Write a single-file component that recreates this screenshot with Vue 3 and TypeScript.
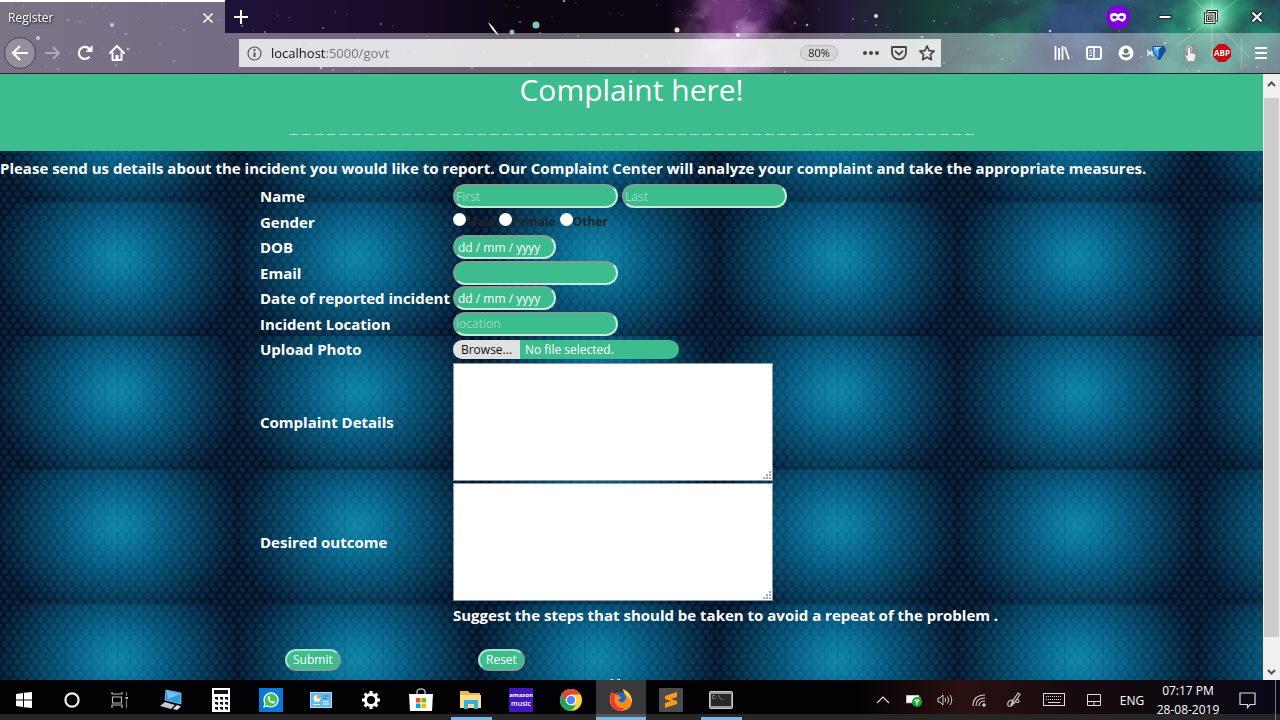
<script setup lang="ts">
import { ref } from 'vue'

interface Star {
  x: number
  y: number
  r: number
  c: string
}

const palette = ['#ffffff', '#e9dcb8', '#cfc6e6', '#bfe6ea']
const stars: Star[] = Array.from({ length: 150 }, (_, i) => ({
  x: (i * 397 + (i % 7) * 53) % 1280,
  y: (i * 31 + (i % 5) * 11) % 73,
  r: i % 19 === 0 ? 1.3 : i % 4 === 0 ? 0.8 : 0.5,
  c: palette[i % palette.length],
}))

const genders = ['Male', 'Female', 'Other']
const gender = ref('')
const first = ref('')
const last = ref('')
const dob = ref('')
const email = ref('')
const incidentDate = ref('')
const place = ref('')
const details = ref('')
const outcome = ref('')
const address = ref('localhost:5000/govt')
const rule = '_ '.repeat(55).trim()
</script>

<template>
  <div class="screen">
    <header class="chrome">
      <svg class="sky" viewBox="0 0 1280 73" preserveAspectRatio="none" aria-hidden="true">
        <defs>
          <linearGradient id="skyBase" x1="0" x2="1" y1="0" y2="0">
            <stop offset="0" stop-color="#2b2238" />
            <stop offset=".17" stop-color="#20133a" />
            <stop offset=".32" stop-color="#170a26" />
            <stop offset=".42" stop-color="#0a060e" />
            <stop offset=".52" stop-color="#0c0612" />
            <stop offset=".57" stop-color="#3c1c48" />
            <stop offset=".62" stop-color="#160b1c" />
            <stop offset=".66" stop-color="#241a38" />
            <stop offset=".7" stop-color="#16302e" />
            <stop offset=".77" stop-color="#1d5648" />
            <stop offset=".82" stop-color="#2a4468" />
            <stop offset=".88" stop-color="#2c5a76" />
            <stop offset=".94" stop-color="#2b8068" />
            <stop offset="1" stop-color="#24505c" />
          </linearGradient>
          <radialGradient id="burst">
            <stop offset="0" stop-color="#f0fff4" />
            <stop offset=".25" stop-color="#8fe8be" stop-opacity=".9" />
            <stop offset="1" stop-color="#2a9a74" stop-opacity="0" />
          </radialGradient>
          <radialGradient id="fade">
            <stop offset=".3" stop-color="#fff" />
            <stop offset="1" stop-color="#fff" stop-opacity="0" />
          </radialGradient>
          <mask id="veil"><ellipse cx="738" cy="34" rx="70" ry="80" fill="url(#fade)" /></mask>
          <filter id="soft" x="-40%" y="-40%" width="180%" height="180%">
            <feGaussianBlur stdDeviation="7" />
          </filter>
          <filter id="wisps" x="0" y="0" width="100%" height="100%">
            <feTurbulence type="fractalNoise" baseFrequency=".02 .03" numOctaves="4" seed="8" />
            <feColorMatrix values="0 0 0 0 .02  0 0 0 0 .02  0 0 0 0 .05  3 0 0 0 -1.2" />
          </filter>
          <filter id="glow" x="0" y="0" width="100%" height="100%">
            <feTurbulence type="fractalNoise" baseFrequency=".03 .04" numOctaves="4" seed="21" />
            <feColorMatrix values="0 0 0 0 .75  0 0 0 0 .45  0 0 0 0 .78  3 0 0 0 -1.3" />
          </filter>
        </defs>
        <rect width="1280" height="73" fill="url(#skyBase)" />
        <g filter="url(#soft)">
          <path d="M680 85L705 30L700-10H735L765 15L735 85Z" fill="#8c4892" opacity=".7" />
          <path d="M740 80L765 30L785-10H765L735 30Z" fill="#5c2b72" opacity=".8" />
          <path d="M1020-10H1060L1040 30L1000 80H960Z" fill="#238263" opacity=".6" />
          <path d="M1150 80L1170 10L1250-10L1290 30L1220 80Z" fill="#20a078" opacity=".55" />
          <path d="M1050 0L1110 10L1090 60L1040 50Z" fill="#3d568c" opacity=".5" />
        </g>
        <g mask="url(#veil)"><rect x="660" width="160" height="73" filter="url(#glow)" opacity=".5" /></g>
        <rect x="850" width="430" height="73" filter="url(#wisps)" opacity=".5" />
        <circle cx="1212" cy="16" r="34" fill="url(#burst)" />
        <path d="M1178 45L1250-10M1190-5L1250 58M1212-10V60" stroke="#b8f5dc" stroke-width=".7" opacity=".6" />
        <circle v-for="(s, i) in stars" :key="i" :cx="s.x" :cy="s.y" :r="s.r" :fill="s.c" opacity=".7" />
        <path d="M488 22Q494 27 499 36Q492 31 488 22" fill="#fff" />
        <circle cx="536" cy="25" r="3.500" fill="#7fc4cc" />
        <circle cx="512" cy="32" r="2.500" fill="#7fb9cc" />
        <circle cx="677" cy="30" r="2.500" fill="#efe6cc" />
        <circle cx="738" cy="35" r="2" fill="#efe6dc" />
        <circle cx="876" cy="16" r="2" fill="#efd8bc" />
        <circle cx="112" cy="25" r="2" fill="#b79cff" />
        <circle cx="38" cy="38" r="2" fill="#b79cff" />
      </svg>

      <div class="tabs">
        <div class="tab">
          <span>Register</span>
          <button class="icon close" aria-label="Close tab">
            <svg width="12" height="12" viewBox="0 0 12 12"><path d="M1.500 1.500L10.500 10.500M10.500 1.500L1.500 10.500" stroke="#fff" stroke-width="1.600" /></svg>
          </button>
        </div>
        <button class="icon plus" aria-label="New tab">
          <svg width="14" height="14" viewBox="0 0 14 14"><path d="M7 0V14M0 7H14" stroke="#fff" stroke-width="2" /></svg>
        </button>
        <span class="mask">
          <svg width="24" height="24" viewBox="0 0 24 24">
            <circle cx="12" cy="12" r="12" fill="#8000d7" />
            <path d="M4 10.500C5 7.500 9.500 7.500 12 9.500C14.500 7.500 19 7.500 20 10.500C20.300 14.500 18 17 15.500 16.500C13.800 16 13.500 15 12 15C10.500 15 10.200 16 8.500 16.500C6 17 3.700 14.500 4 10.500Z" fill="#fff" />
            <ellipse cx="8.500" cy="12.300" rx="2.300" ry="1.500" fill="#8000d7" /><ellipse cx="15.500" cy="12.300" rx="2.300" ry="1.500" fill="#8000d7" />
          </svg>
        </span>
        <button class="icon win" aria-label="Minimize">
          <svg width="14" height="14" viewBox="0 0 14 14"><rect x="1" y="5.500" width="12" height="3" fill="#fff" stroke="#222" /></svg>
        </button>
        <button class="icon win" aria-label="Restore">
          <svg width="14" height="14" viewBox="0 0 14 14" fill="none"><path d="M4 3.500V1.500H12.500V10H10.500" stroke="#222" stroke-width="3" /><path d="M4 3.500V1.500H12.500V10H10.500" stroke="#fff" stroke-width="1.200" /><rect x="1.500" y="4" width="8.500" height="8.500" stroke="#222" stroke-width="3" /><rect x="1.500" y="4" width="8.500" height="8.500" stroke="#fff" stroke-width="1.200" /><rect x="4.500" y="7" width="2.500" height="2.500" fill="#fff" stroke="#222" /></svg>
        </button>
        <button class="icon win" aria-label="Close window">
          <svg width="14" height="14" viewBox="0 0 14 14"><path d="M2 2L12 12M12 2L2 12" stroke="#222" stroke-width="4" /><path d="M2.500 2.500L11.500 11.500M11.500 2.500L2.500 11.500" stroke="#fff" stroke-width="2" /></svg>
        </button>
      </div>

      <div class="toolbar">
        <button class="icon tool back" aria-label="Back">
          <svg width="18" height="16" viewBox="0 0 18 16" fill="none" stroke="#fff" stroke-width="2.200"><path d="M17 8H2M9 1L2 8L9 15" /></svg>
        </button>
        <button class="icon tool dim" aria-label="Forward">
          <svg width="16" height="14" viewBox="0 0 16 14" fill="none" stroke="#fff" stroke-width="2"><path d="M0 7H14M8 1L14 7L8 13" /></svg>
        </button>
        <button class="icon tool" aria-label="Reload">
          <svg width="16" height="16" viewBox="0 0 16 16"><path d="M12.500 11.800A6 6 0 1 1 12.300 3.900" fill="none" stroke="#fff" stroke-width="2.200" /><path d="M15.500 0V7H8.500Z" fill="#fff" /></svg>
        </button>
        <button class="icon tool" aria-label="Home">
          <svg width="16" height="16" viewBox="0 0 16 16" fill="none" stroke="#fff" stroke-width="2" stroke-linejoin="round" stroke-linecap="round"><path d="M1 8L8 1L15 8" /><path d="M3.500 8V15H12.500V8" /><path d="M8 15V10" stroke-width="3" stroke-linecap="butt" /></svg>
        </button>
        <div class="urlbar">
          <svg width="15" height="15" viewBox="0 0 15 15"><circle cx="7.500" cy="7.500" r="6.500" fill="none" stroke="#555" stroke-width="1.200" /><path d="M7.500 6.500V11" stroke="#555" stroke-width="2" /><circle cx="7.500" cy="4.200" r="1.100" fill="#555" /></svg>
          <span class="address"><b>{{ address.split(':')[0] }}</b>:{{ address.split(':')[1] }}</span>
          <button class="zoom">80%</button>
          <button class="icon" aria-label="Page actions"><svg width="16" height="16" viewBox="0 0 16 16" fill="#444"><circle cx="2" cy="8" r="2" /><circle cx="8" cy="8" r="2" /><circle cx="14" cy="8" r="2" /></svg></button>
          <button class="icon" aria-label="Pocket"><svg width="16" height="16" viewBox="0 0 16 16" fill="none" stroke="#444" stroke-width="1.800" stroke-linejoin="round" stroke-linecap="round"><path d="M1 2H15V7.500A7 6.800 0 0 1 1 7.500Z" /><path d="M4.500 6.300L8 9.600L11.500 6.300" /></svg></button>
          <button class="icon" aria-label="Bookmark"><svg width="16" height="16" viewBox="0 0 16 16" fill="none" stroke="#444" stroke-width="1.700" stroke-linejoin="round"><path d="M8 1L10.100 5.600L15.100 6.200L11.400 9.600L12.400 14.700L8 12.200L3.600 14.700L4.600 9.600L.9 6.200L5.900 5.600Z" /></svg></button>
        </div>
        <button class="icon tool" aria-label="Library"><svg width="16" height="16" viewBox="0 0 16 16" fill="none" stroke="#fff" stroke-width="1.800"><path d="M1.500 1V15M5 3V15M8.500 1V15M10.800 2L15 14.500" /></svg></button>
        <button class="icon tool" aria-label="Sidebar"><svg width="18" height="16" viewBox="0 0 18 16" fill="none" stroke="#fff"><rect x="2" y="2" width="14" height="12" rx="2" stroke-width="2" /><path d="M9 2V14" stroke-width="1.500" /><path d="M4.500 5.500H7M4.500 8H7M4.500 10.500H7" /></svg></button>
        <button class="icon tool" aria-label="Account"><svg width="16" height="16" viewBox="0 0 16 16"><circle cx="8" cy="8" r="7.500" fill="#fff" /><circle cx="8" cy="6" r="2.500" fill="#68747c" /><path d="M3.500 9Q8 10.500 12.500 9Q11.500 12.500 8 12.500Q4.500 12.500 3.500 9Z" fill="#68747c" /></svg></button>
        <button class="icon tool" aria-label="Download helper"><svg width="22" height="16" viewBox="0 0 22 16"><path d="M0 5L6 11M6 5L0 11M0 8H6" stroke="#dce8ec" stroke-width="1.500" /><path d="M6 1H17L19 5L13 15H11.500L5 5Z" fill="#0b4f9e" /><path d="M7 2H12L11.500 13L6 5Z" fill="#4aaeea" /><path d="M7 2H15L10 5Z" fill="#b4e4fb" /></svg></button>
        <button class="icon tool" aria-label="Touch extension"><svg width="18" height="18" viewBox="0 0 18 18"><rect x="2" y="1" width="14" height="14" fill="#8e8e8e" opacity=".7" /><circle cx="8" cy="5" r="3" fill="none" stroke="#c8c8c8" /><path d="M7 4Q8 3 9 4V9L14 10Q15 11 13 17H7L4 11L7 12Z" fill="#eee" /></svg></button>
        <button class="icon tool" aria-label="Ad blocker"><svg width="18" height="18" viewBox="0 0 18 18"><path d="M5.500 0H12.500L18 5.500V12.500L12.500 18H5.500L0 12.500V5.500Z" fill="#c70d12" /><text x="9" y="12" class="abp" text-anchor="middle">ABP</text></svg></button>
        <span class="divider"></span>
        <button class="icon tool" aria-label="Menu"><svg width="12" height="12" viewBox="0 0 12 12"><path d="M0 1H12M0 6H12M0 11H12" stroke="#fff" stroke-width="2" /></svg></button>
      </div>
    </header>

    <main class="viewport">
      <div class="page">
        <div class="banner">
          <h1>Complaint here!</h1>
          <p aria-hidden="true">{{ rule }}</p>
        </div>
        <p class="intro">Please send us details about the incident you would like to report. Our Complaint Center will analyze your complaint and take the appropriate measures.</p>
        <form @submit.prevent>
          <table>
            <tbody>
              <tr>
                <th><label for="first">Name</label></th>
                <td><input id="first" v-model="first" class="field" placeholder="First" /><input v-model="last" class="field second" aria-label="Last name" placeholder="Last" /></td>
              </tr>
              <tr>
                <th>Gender</th>
                <td>
                  <div class="radios">
                    <label v-for="g in genders" :key="g"><input v-model="gender" type="radio" name="gender" :value="g" />{{ g }}</label>
                  </div>
                </td>
              </tr>
              <tr>
                <th><label for="dob">DOB</label></th>
                <td><input id="dob" v-model="dob" class="field date" placeholder="dd / mm / yyyy" /></td>
              </tr>
              <tr>
                <th><label for="email">Email</label></th>
                <td><input id="email" v-model="email" type="email" class="field" /></td>
              </tr>
              <tr>
                <th><label for="when">Date of reported incident</label></th>
                <td><input id="when" v-model="incidentDate" class="field date" placeholder="dd / mm / yyyy" /></td>
              </tr>
              <tr>
                <th><label for="place">Incident Location</label></th>
                <td><input id="place" v-model="place" class="field" placeholder="location" /></td>
              </tr>
              <tr>
                <th><label for="photo">Upload Photo</label></th>
                <td>
                  <label class="file"><input id="photo" type="file" /><span class="browse">Browse...</span><span>No file selected.</span></label>
                </td>
              </tr>
              <tr class="tall">
                <th><label for="details">Complaint Details</label></th>
                <td>
                  <div class="area"><textarea id="details" v-model="details"></textarea><svg width="8" height="8" viewBox="0 0 8 8" fill="#aaa"><path d="M6 0H8V2H6ZM3 3H5V5H3ZM6 3H8V5H6ZM0 6H2V8H0ZM3 6H5V8H3ZM6 6H8V8H6Z" /></svg></div>
                </td>
              </tr>
              <tr class="tall">
                <th><label for="outcome">Desired outcome</label></th>
                <td>
                  <div class="area"><textarea id="outcome" v-model="outcome"></textarea><svg width="8" height="8" viewBox="0 0 8 8" fill="#aaa"><path d="M6 0H8V2H6ZM3 3H5V5H3ZM6 3H8V5H6ZM0 6H2V8H0ZM3 6H5V8H3ZM6 6H8V8H6Z" /></svg></div>
                </td>
              </tr>
              <tr>
                <th></th>
                <td class="hint">Suggest the steps that should be taken to avoid a repeat of the problem .</td>
              </tr>
              <tr class="actions">
                <td><button type="submit" class="pill">Submit</button></td>
                <td><button type="reset" class="pill">Reset</button></td>
              </tr>
            </tbody>
          </table>
        </form>
        <a class="home" href="#">H</a>
      </div>
      <div class="scrollbar" aria-hidden="true">
        <svg width="17" height="24" viewBox="0 0 17 24" fill="none" stroke="#505050" stroke-width="2"><path d="M5 12L8.500 8.500L12 12" /></svg>
        <div class="thumb"></div>
        <svg width="17" height="17" viewBox="0 0 17 17" fill="none" stroke="#505050" stroke-width="2"><path d="M5 7L8.500 10.500L12 7" /></svg>
      </div>
    </main>

    <footer class="taskbar">
      <button class="app sys" aria-label="Start"><svg width="16" height="16" viewBox="0 0 16 16" fill="#fff"><path d="M0 2L7 1V7.500H0ZM8 .8L16 0V7.500H8ZM0 8.500H7V15L0 14ZM8 8.500H16V16L8 15.200Z" /></svg></button>
      <button class="app sys" aria-label="Search"><svg width="16" height="16" viewBox="0 0 16 16"><circle cx="8" cy="8" r="6.600" fill="none" stroke="#eee" stroke-width="2.200" /></svg></button>
      <button class="app sys" aria-label="Task view"><svg width="18" height="16" viewBox="0 0 18 16" fill="none" stroke="#bbb" stroke-width="1.200"><path d="M1 0V2H11V0M1.500 5H10.500V11H1.500ZM1 16V13H11V16" /><path d="M15.500 0V4M15.500 8V16" stroke="#777" /><path d="M14.500 6H17" stroke-width="2" /></svg></button>
      <button class="app spaced" aria-label="This PC"><svg width="24" height="22" viewBox="0 0 24 22"><path d="M7 1L22 4V15L6 11Z" fill="#2f9be0" stroke="#aad8f2" stroke-width=".7" /><path d="M8 2L21 5L9 10Z" fill="#72c4f4" /><path d="M1 17L6 13L16 16L12 20Z" fill="#c5cbd0" /><path d="M14 20L18 16L22 17.500L18 21Z" fill="#dfe3e6" /></svg></button>
      <button class="app" aria-label="Calculator"><svg width="18" height="24" viewBox="0 0 18 24"><rect width="18" height="24" fill="#fff" /><path d="M2 2H16V6H2ZM3 9H6V12L3 11ZM8 9H11V12L8 11ZM13 9H16V12L13 11ZM3 14H6V17L3 16ZM8 14H11V17L8 16ZM13 14H16V17L13 16ZM3 19H6V22L3 21ZM8 19H11V22L8 21ZM13 19H16V22L13 21Z" fill="#111" /></svg></button>
      <button class="app" aria-label="WhatsApp"><svg width="24" height="24" viewBox="0 0 24 24"><rect width="24" height="24" fill="#0878d7" /><path d="M5 19L6 15.500A7 7 0 1 1 8.500 18Z" fill="#3fc351" stroke="#fff" stroke-width="1.200" /><path d="M9.500 8L11 8.500L11.300 10.500L10.500 11.300Q11.300 13 13 13.700L14 12.700L16 13.700Q15.800 15.700 13.500 15.500Q9.500 14.500 8.700 10.500Q8.700 9 9.500 8Z" fill="#fff" /></svg></button>
      <button class="app" aria-label="Control panel"><svg width="22" height="16" viewBox="0 0 22 16"><rect x=".5" y=".5" width="21" height="15" fill="#65b9e8" stroke="#a8dcf5" /><circle cx="7" cy="6.500" r="3.500" fill="#e8f5fb" /><path d="M7 6.500V3A3.500 3.500 0 0 1 10.500 6.500Z" fill="#f0a030" /><path d="M3 12.500H10M13 9.500H19M13 12H19" stroke="#f4fcff" /><path d="M13 4H19M13 6.500H17" stroke="#1f80bc" /></svg></button>
      <button class="app" aria-label="Settings"><svg width="20" height="20" viewBox="0 0 20 20"><circle cx="10" cy="10" r="5.500" fill="none" stroke="#fff" stroke-width="3" /><g stroke="#fff" stroke-width="3"><path d="M10 1V4M10 16V19M1 10H4M16 10H19M3.600 3.600L5.800 5.800M14.200 14.200L16.400 16.400M3.600 16.400L5.800 14.200M14.200 5.800L16.400 3.600" /></g></svg></button>
      <button class="app" aria-label="Store"><svg width="24" height="24" viewBox="0 0 24 24"><path d="M8 7V4Q8 1 12 1Q16 1 16 4V7" fill="none" stroke="#aaa" stroke-width="1.500" /><path d="M0 6H24L23 23H1Z" fill="#fff" /><path d="M7 10H11.500V14.500H7Z" fill="#f25022" /><path d="M12.500 10H17V14.500H12.500Z" fill="#7fba00" /><path d="M7 15.500H11.500V20H7Z" fill="#00a4ef" /><path d="M12.500 15.500H17V20H12.500Z" fill="#ffb900" /></svg></button>
      <button class="app open" aria-label="File explorer"><svg width="22" height="20" viewBox="0 0 22 20"><path d="M0 1H8L10 3H20V6H0Z" fill="#e9b94a" /><path d="M0 5H21V18H0Z" fill="#fbe08c" /><path d="M4 19V10H18V19H14V14H8V19Z" fill="#38b0e4" /></svg></button>
      <button class="app" aria-label="Amazon Music"><svg width="24" height="24" viewBox="0 0 24 24"><rect width="24" height="24" fill="#4117bd" /><text x="12" y="9" class="amz" text-anchor="middle">amazon</text><text x="12" y="18" class="mus" text-anchor="middle">music</text></svg></button>
      <button class="app" aria-label="Chrome"><svg width="22" height="22" viewBox="0 0 22 22"><circle cx="11" cy="11" r="11" fill="#fdd23f" /><path d="M1.500 5.500A11 11 0 0 1 20.500 5.500H11L6.200 13.700Z" fill="#dd4b39" /><path d="M1.500 5.500L6.200 13.700L11 16.500H15.800L11 22A11 11 0 0 1 1.500 5.500Z" fill="#1da362" /><circle cx="11" cy="11" r="5.300" fill="#fff" /><circle cx="11" cy="11" r="4.200" fill="#4b8bf5" /></svg></button>
      <button class="app active" aria-label="Firefox"><svg width="24" height="24" viewBox="0 0 24 24"><circle cx="12" cy="12.500" r="8" fill="#2476d2" /><path d="M3 4Q4 6 6 6Q9 4 11 5Q9 7 11 9Q14 9 13 11L10 13Q13 16 16 13Q19 10 15 5Q14 3 14 1Q23 5 23 14Q22 22 13 23Q4 23 1 15Q0 8 3 4Z" fill="#ff8a1e" /><path d="M3 4Q4 7 6 7Q4 13 8 18Q12 21 16 20Q10 26 4 20Q-1 13 3 4Z" fill="#f0382f" /><path d="M6 7Q9 4 12 5Q15 6 16 10Q15 13 12 14Q9 13 10 11L13 10Q10 9 10 7Z" fill="#1b62c4" /><path d="M14 1Q24 6 22.500 15Q21 10 18 8Q15 5 14 1Z" fill="#ffdc3e" /></svg></button>
      <button class="app" aria-label="Sublime Text"><svg width="24" height="24" viewBox="0 0 24 24"><rect width="24" height="24" rx="1" fill="#4b4b4b" /><path d="M6 8L18 4V9L12 11L18 13V16L6 20V15L12 13L6 11Z" fill="#ff9b17" /></svg></button>
      <button class="app open" aria-label="Command prompt"><svg width="24" height="18" viewBox="0 0 24 18"><rect x=".5" y=".5" width="23" height="17" rx="1" fill="#9a9a9a" stroke="#c8c8c8" /><rect x="2" y="3" width="20" height="12" fill="#262626" /><text x="3" y="8" class="cmd">C:\_</text></svg></button>

      <div class="tray">
        <button class="icon w32" aria-label="Hidden icons"><svg width="14" height="8" viewBox="0 0 14 8" fill="none" stroke="#ddd" stroke-width="1.200"><path d="M1 7L7 1L13 7" /></svg></button>
        <button class="icon w30" aria-label="Battery"><svg width="16" height="14" viewBox="0 0 16 14"><rect x=".7" y="2.700" width="12" height="7" fill="#fff" stroke="#ddd" /><path d="M14 4V8" stroke="#ddd" /><circle cx="11" cy="9" r="5" fill="#16a834" /><path d="M11 12V8M9 7H13V8Q11 11 9 8Z" stroke="#fff" fill="none" /></svg></button>
        <button class="icon w32" aria-label="Volume"><svg width="16" height="14" viewBox="0 0 16 14" fill="none" stroke="#ccc"><path d="M1 5H3L6 2V12L3 9H1ZM8 5Q9.500 7 8 9M10.500 3.500Q13 7 10.500 10.500M13 2Q16.500 7 13 12" /></svg></button>
        <button class="icon w36" aria-label="Network"><svg width="14" height="14" viewBox="0 0 14 14" fill="none" stroke="#ccc" stroke-width="1.200"><path d="M1 13Q1 2 13 2M4 13Q4 5 13 5M7 13Q7 8 13 8" /><circle cx="12" cy="12" r="1.200" fill="#ccc" /></svg></button>
        <button class="icon w34" aria-label="Pen"><svg width="14" height="16" viewBox="0 0 14 16" fill="none" stroke="#ccc" stroke-width="1.200"><path d="M5 10L11 1L13 2.500L7 11.500L4 13ZM1 14Q0 9 4 8Q7 8 6 12Q5 15 1 14M8 9Q11 6 12 9Q12 11 9 10" /></svg></button>
        <button class="icon w46" aria-label="Touch keyboard"><svg width="22" height="14" viewBox="0 0 22 14" fill="none" stroke="#ddd"><rect x=".5" y=".5" width="21" height="12" /><path d="M3 3.500H19M3 6.500H19" stroke-dasharray="1 1" /><path d="M5 9.500H17" /></svg></button>
        <button class="icon w34" aria-label="Touchpad"><svg width="14" height="12" viewBox="0 0 14 12" fill="none" stroke="#ddd"><path d="M.5.500H13.500V11.500H.5ZM.5 7.500H13.500M7 7.500V11.500" /></svg></button>
        <button class="icon lang">ENG</button>
        <button class="icon clock"><span>07:17 PM</span><span>28-08-2019</span></button>
        <button class="icon note" aria-label="Notifications"><svg width="17" height="17" viewBox="0 0 17 17" fill="none" stroke="#ddd" stroke-width="1.200"><path d="M1 1H16V12.500H11L8.500 15.500V12.500H1Z" /></svg></button>
        <span class="peek"></span>
      </div>
    </footer>
  </div>
</template>

<style>
html,
body {
  margin: 0;
  overflow: hidden;
}
</style>

<style scoped>
* {
  box-sizing: border-box;
}

.screen {
  display: flex;
  flex-direction: column;
  height: 100vh;
  font-family: 'Open Sans', 'Noto Sans', sans-serif;
  color: #fff;
  background: #000;
}

button,
input,
textarea {
  font-family: inherit;
}

.icon {
  display: flex;
  align-items: center;
  justify-content: center;
  flex: none;
  padding: 0;
  border: 0;
  background: none;
  color: inherit;
}

.chrome {
  position: relative;
  flex: none;
  border-bottom: 1px solid #222;
  overflow: hidden;
}

.sky {
  position: absolute;
  inset: 0;
  width: 100%;
  height: 100%;
}

.tabs {
  position: relative;
  display: flex;
  align-items: center;
  height: 33px;
}

.tab {
  display: flex;
  align-items: center;
  justify-content: space-between;
  width: 225px;
  height: 100%;
  padding: 0 8px;
  border-top: 2px solid #fff;
  background: rgba(235, 230, 240, 0.42);
  font-size: 12px;
  text-shadow: 1px 1px 2px #111;
}

.close {
  width: 18px;
  height: 18px;
}

.plus {
  width: 32px;
  height: 32px;
}

.mask {
  display: flex;
  margin-left: auto;
  margin-right: 12px;
}

.win {
  width: 46px;
  height: 32px;
}

.toolbar {
  position: relative;
  display: flex;
  align-items: center;
  height: 40px;
  padding: 0 3px 0 4px;
  background: rgba(235, 230, 240, 0.42);
}

.tool {
  width: 32px;
  height: 32px;
}

.back {
  border: 1px solid #4a464f;
  border-radius: 50%;
  background: rgba(255, 255, 255, 0.2);
  margin-right: 1px;
}

.dim {
  opacity: 0.4;
}

.urlbar {
  display: flex;
  align-items: center;
  flex: 1;
  gap: 12px;
  height: 28px;
  margin: 0 105px 0 106px;
  padding: 0 6px 0 8px;
  background: rgba(255, 255, 255, 0.8);
}

.address {
  flex: 1;
  margin-left: -3px;
  font-size: 13px;
  color: #777;
}

.address b {
  font-weight: 400;
  color: #111;
}

.zoom {
  width: 38px;
  height: 16px;
  margin-right: 13px;
  padding: 0;
  border: 1px solid #bbb;
  border-radius: 8px;
  background: #d6d5d8;
  font-size: 11px;
  line-height: 14px;
  color: #222;
}

.abp {
  font: 700 8px 'Open Sans', sans-serif;
  fill: #fff;
}

.divider {
  width: 1px;
  height: 32px;
  margin: 0 3px;
  background: rgba(255, 255, 255, 0.25);
}

.viewport {
  display: flex;
  flex: 1;
  min-height: 0;
}

.page {
  flex: 1;
  min-width: 0;
  background-color: #031a36;
  background-image:
    radial-gradient(circle at 50% 50%, rgba(60, 180, 210, 0.14) 0 2px, transparent 4px),
    radial-gradient(circle at 50% 50%, rgba(60, 180, 210, 0.14) 0 2px, transparent 4px),
    repeating-linear-gradient(90deg, rgba(0, 10, 30, 0.1) 0 1px, transparent 1px 13px),
    radial-gradient(ellipse 124px 108px at 117px 56px, #0d83a6 0%, #086c91 22%, #044e74 45%, #033450 68%, #021c38 86%, #010d22 100%);
  background-size: 9px 12px, 9px 12px, 240px 134px, 240px 134px;
  background-position: 0 0, 4px 6px, 0 128px, 0 128px;
}

.banner {
  height: 77px;
  background: #3dbd8d;
  text-align: center;
}

.banner h1 {
  margin: 0;
  font-size: 30px;
  font-weight: 400;
  line-height: 32px;
}

.banner p {
  margin: 0;
  font-family: 'Liberation Sans', sans-serif;
  font-size: 15px;
  font-weight: 700;
  line-height: 44px;
  white-space: nowrap;
}

.intro {
  margin: 0;
  padding-top: 2px;
  font-size: 15px;
  font-weight: 700;
  line-height: 30px;
  white-space: nowrap;
}

table {
  margin-left: 260px;
  border-collapse: collapse;
}

tr {
  height: 25px;
}

tr:nth-child(odd) {
  height: 26px;
}

tr.tall {
  height: 120px;
}

th,
td {
  padding: 0;
  vertical-align: middle;
  text-align: left;
  white-space: nowrap;
  line-height: 20px;
}

th {
  width: 193px;
  font-size: 15px;
}

.field {
  display: inline-block;
  width: 165px;
  height: 24px;
  padding: 0 1px;
  border: 2px solid;
  border-color: #7f9f94 #c4ecdb #c4ecdb #7f9f94;
  border-radius: 12px;
  background: #3dbd8d;
  color: #fff;
  font-size: 12px;
  vertical-align: top;
}

.field::placeholder {
  color: #93dcbf;
}

.second {
  margin-left: 4px;
}

.date {
  width: 103px;
  padding: 0 3px;
}

.date::placeholder {
  color: #fff;
}

.radios {
  display: flex;
  gap: 4px;
  font-size: 12px;
  font-weight: 700;
  color: #212529;
}

.radios label {
  display: flex;
}

.radios input {
  appearance: none;
  width: 13px;
  height: 13px;
  margin: 1px 0 0;
  border-radius: 50%;
  background: #fff;
}

.radios input:checked {
  border: 4px solid #fff;
  background: #333;
}

.file {
  position: relative;
  display: flex;
  align-items: center;
  gap: 5px;
  width: 226px;
  height: 19px;
  border-radius: 10px;
  background: #3dbd8d;
  overflow: hidden;
  font-size: 12px;
  line-height: 19px;
}

.file input {
  position: absolute;
  inset: 0;
  opacity: 0;
}

.browse {
  width: 67px;
  background: #e1e1e1;
  color: #111;
  text-align: center;
}

.area {
  position: relative;
  width: 320px;
  height: 118px;
}

.area textarea {
  display: block;
  width: 100%;
  height: 100%;
  border: 1px solid #8a9aa4;
  background: #fff;
  resize: none;
}

.area svg {
  position: absolute;
  right: 2px;
  bottom: 2px;
}

.hint {
  font-size: 15px;
  font-weight: 700;
}

tr.actions {
  height: 64px;
}

.actions td {
  padding: 0 25px;
}

.pill {
  height: 22px;
  padding: 0 6px;
  border: 2px solid;
  border-color: #a8e0ca #7f9f94 #7f9f94 #a8e0ca;
  border-radius: 11px;
  background: #3dbd8d;
  color: #fff;
  font-size: 12px;
  line-height: 18px;
}

.home {
  display: block;
  width: 12px;
  margin: -18px 0 0 609px;
  font-size: 16px;
  font-weight: 700;
  line-height: 24px;
  color: #fff;
  text-decoration: none;
}

.scrollbar {
  display: flex;
  flex-direction: column;
  flex: none;
  width: 17px;
  background: #f0f0f0;
}

.thumb {
  flex: 1;
  margin: 0 1px 26px;
  background: #cdcdcd;
}

.taskbar {
  position: relative;
  display: flex;
  flex: none;
  height: 40px;
  background: linear-gradient(90deg, transparent 67%, rgba(90, 35, 28, 0.45) 75%, rgba(50, 22, 30, 0.4) 84%, rgba(14, 12, 32, 0.6)) 0 0 / 100% 34px no-repeat, linear-gradient(#020204 34px, #262626 34px);
}

.app {
  display: flex;
  align-items: center;
  justify-content: center;
  flex: none;
  position: relative;
  width: 50px;
  padding: 0;
  border: 0;
  background: none;
}

.sys {
  width: 48px;
}

.spaced {
  margin-left: 2px;
}

.active {
  background: rgba(255, 255, 255, 0.22);
}

.open::after,
.active::after {
  content: '';
  position: absolute;
  bottom: 0;
  width: 41px;
  height: 3px;
  background: #76b9ed;
}

.active::after {
  width: 50px;
}

.amz {
  font: 700 6px 'Open Sans', sans-serif;
  fill: #fff;
}

.mus {
  font: 600 7px 'Open Sans', sans-serif;
  fill: #fff;
}

.cmd {
  font: 5px 'Liberation Mono', monospace;
  fill: #ddd;
}

.tray {
  display: flex;
  margin-left: auto;
}

.tray .icon {
  font-size: 12px;
}

.w30 {
  width: 30px;
}

.w32 {
  width: 32px;
}

.w34 {
  width: 34px;
}

.w36 {
  width: 36px;
}

.w46 {
  width: 46px;
}

.lang {
  width: 42px;
}

.clock {
  flex-direction: column;
  width: 70px;
  line-height: 19px;
}

.note {
  width: 48px;
}

.peek {
  width: 5px;
  margin-left: 4px;
  border-left: 1px solid #777;
}
</style>
